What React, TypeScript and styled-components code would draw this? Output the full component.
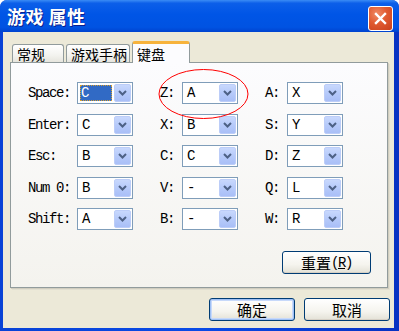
import styled, { createGlobalStyle } from "styled-components";

const GlobalStyle = createGlobalStyle`
  html, body {
    margin: 0;
    padding: 0;
    background: #ffffff;
  }
  * {
    box-sizing: border-box;
  }
`;

const CJK = `"Noto Sans CJK SC", "Liberation Sans", sans-serif`;
const MONO = `"Liberation Mono", "Noto Sans CJK SC", monospace`;

const Frame = styled.div`
  display: flex;
  flex-direction: column;
  width: 399px;
  height: 331px;
  background: linear-gradient(to right, #0842d6 0%, #0a4be6 50%, #0732c2 100%);
  border-radius: 7px 7px 0 0;
  overflow: hidden;
`;

const TitleBar = styled.div`
  display: flex;
  align-items: center;
  justify-content: space-between;
  height: 32px;
  padding: 0 6px 0 7px;
  background: linear-gradient(
    to bottom,
    #3b8cf5 0%,
    #0c5fe9 10%,
    #0055e6 45%,
    #0053e2 85%,
    #0043cf 100%
  );
`;

const Title = styled.div`
  font-family: ${CJK};
  font-size: 18px;
  font-weight: bold;
  color: #ffffff;
  text-shadow: 1px 1px 0 #0a1e8c;
  letter-spacing: 0.5px;
`;

const CloseButton = styled.div`
  display: flex;
  align-items: center;
  justify-content: center;
  width: 25px;
  height: 25px;
  margin-top: 4px;
  border: 1px solid #ffffff;
  border-radius: 3px;
  background: radial-gradient(circle at 35% 30%, #f08a64 0%, #e05a30 45%, #c8401c 100%);
`;

const Client = styled.div`
  flex: 1;
  display: flex;
  flex-direction: column;
  margin: 0 5px 3px 3px;
  padding: 9px 6px 0 7px;
  background: #ece9d8;
`;

const TabRow = styled.div`
  display: flex;
  align-items: flex-end;
  height: 22px;
  margin-bottom: -1px;
  padding-left: 2px;
  position: relative;
  z-index: 1;
`;

const Tab = styled.div<{ $active?: boolean; $w: number }>`
  display: flex;
  align-items: center;
  width: ${(p) => p.$w}px;
  height: ${(p) => (p.$active ? 22 : 18)}px;
  margin-bottom: ${(p) => (p.$active ? 0 : 1)}px;
  margin-right: 2px;
  padding-left: 4px;
  padding-top: ${(p) => (p.$active ? 1 : 0)}px;
  white-space: nowrap;
  font-family: ${CJK};
  font-size: 14px;
  color: #000000;
  border: 1px solid #919b9c;
  border-bottom: none;
  border-radius: 3px 3px 0 0;
  background: ${(p) =>
    p.$active ? "#fcfcfe" : "linear-gradient(to bottom, #ffffff 0%, #f3f3ef 60%, #e6e5de 100%)"};
  border-top: ${(p) => (p.$active ? "3px solid #f7b33c" : "1px solid #919b9c")};
`;

const Panel = styled.div`
  position: relative;
  display: flex;
  flex-direction: column;
  height: 226px;
  padding: 19px 16px 0 17px;
  border: 1px solid #919b9c;
  background: linear-gradient(to bottom, #fcfcfe 0%, #f4f3ee 100%);
  box-shadow: 1px 1px 0 #d0cdbf, 2px 2px 0 #e2dfd0;
`;

const Grid = styled.div`
  display: grid;
  grid-template-columns: 105px 78px 78px;
  column-gap: 27px;
  row-gap: 9.5px;
`;

const Field = styled.div`
  display: flex;
  align-items: center;
  justify-content: space-between;
`;

const Label = styled.span`
  font-family: ${MONO};
  font-size: 14px;
  letter-spacing: -1.4px;
  color: #000000;
`;

const Combo = styled.div`
  display: flex;
  align-items: stretch;
  width: 56px;
  height: 22px;
  padding: 1px;
  border: 1px solid #7f9db9;
  background: #ffffff;
`;

const Value = styled.div<{ $selected?: boolean }>`
  flex: 1;
  display: flex;
  align-items: center;
  margin: 1px 2px 1px 1px;
  padding-left: ${(p) => (p.$selected ? 1 : 2)}px;
  font-family: ${MONO};
  font-size: 14px;
  color: ${(p) => (p.$selected ? "#ffffff" : "#000000")};
  background: ${(p) => (p.$selected ? "#316ac5" : "transparent")};
  outline: ${(p) => (p.$selected ? "1px dotted #d8a030" : "none")};
  outline-offset: -1px;
`;

const DropButton = styled.div`
  display: flex;
  align-items: center;
  justify-content: center;
  width: 17px;
  border-radius: 2px;
  border: 1px solid #bccdf8;
  background: linear-gradient(to bottom, #c8d8fd 0%, #b6cafa 50%, #a9bff7 100%);
`;

const ResetRow = styled.div`
  display: flex;
  justify-content: flex-end;
  margin-top: 21px;
`;

const Button = styled.div<{ $default?: boolean; $w: number }>`
  display: flex;
  align-items: center;
  justify-content: center;
  width: ${(p) => p.$w}px;
  height: 23px;
  font-family: ${CJK};
  font-size: 15px;
  color: #000000;
  border: 1px solid #003c74;
  border-radius: 3px;
  background: linear-gradient(to bottom, #ffffff 0%, #f5f4ee 60%, #e3e1d6 100%);
  box-shadow: ${(p) =>
    p.$default
      ? "inset 0 0 0 1px #9fc0f4, inset 0 0 0 2px #c7d9fa"
      : "inset 0 -1px 0 #d6d0c5"};
`;

const Mnemonic = styled.span`
  font-family: ${MONO};
  font-size: 14px;
  letter-spacing: -1.4px;
  u {
    text-decoration: underline;
  }
`;

const ButtonRow = styled.div`
  display: flex;
  justify-content: flex-end;
  gap: 9px;
  margin-top: 10px;
  margin-right: -2px;
`;

const Annotation = styled.svg`
  position: absolute;
  left: 146px;
  top: 4px;
  pointer-events: none;
`;

function Arrow() {
  return (
    <svg width="9" height="6" viewBox="0 0 9 6">
      <path d="M1 1 L4.5 4.5 L8 1" fill="none" stroke="#4d6185" strokeWidth="2" />
    </svg>
  );
}

function Select({ value, selected }: { value: string; selected?: boolean }) {
  return (
    <Combo>
      <Value $selected={selected}>{value}</Value>
      <DropButton>
        <Arrow />
      </DropButton>
    </Combo>
  );
}

const rows: [string, string][][] = [
  [["Space:", "C"], ["Z:", "A"], ["A:", "X"]],
  [["Enter:", "C"], ["X:", "B"], ["S:", "Y"]],
  [["Esc:", "B"], ["C:", "C"], ["D:", "Z"]],
  [["Num 0:", "B"], ["V:", "-"], ["Q:", "L"]],
  [["Shift:", "A"], ["B:", "-"], ["W:", "R"]],
];

export default function App() {
  return (
    <>
      <GlobalStyle />
      <Frame>
        <TitleBar>
          <Title>游戏 属性</Title>
          <CloseButton>
            <svg width="13" height="13" viewBox="0 0 13 13">
              <path d="M2 2 L11 11 M11 2 L2 11" stroke="#ffffff" strokeWidth="2.4" strokeLinecap="square" />
            </svg>
          </CloseButton>
        </TitleBar>
        <Client>
          <TabRow>
            <Tab $w={52}>常规</Tab>
            <Tab $w={64}>游戏手柄</Tab>
            <Tab $w={58} $active>
              键盘
            </Tab>
          </TabRow>
          <Panel>
            <Grid>
              {rows.flat().map(([label, value], i) => (
                <Field key={label + i}>
                  <Label>{label.replace(/ /g, "\u00a0")}</Label>
                  <Select value={value} selected={i === 0} />
                </Field>
              ))}
            </Grid>
            <ResetRow>
              <Button $w={89}>
                重置
                <Mnemonic>
                  (<u>R</u>)
                </Mnemonic>
              </Button>
            </ResetRow>
            <Annotation width="94" height="54" viewBox="0 0 94 54">
              <ellipse cx="46.5" cy="27" rx="44.5" ry="24.5" fill="none" stroke="#ff0000" strokeWidth="1" />
            </Annotation>
          </Panel>
          <ButtonRow>
            <Button $w={86} $default>
              确定
            </Button>
            <Button $w={86}>取消</Button>
          </ButtonRow>
        </Client>
      </Frame>
    </>
  );
}
